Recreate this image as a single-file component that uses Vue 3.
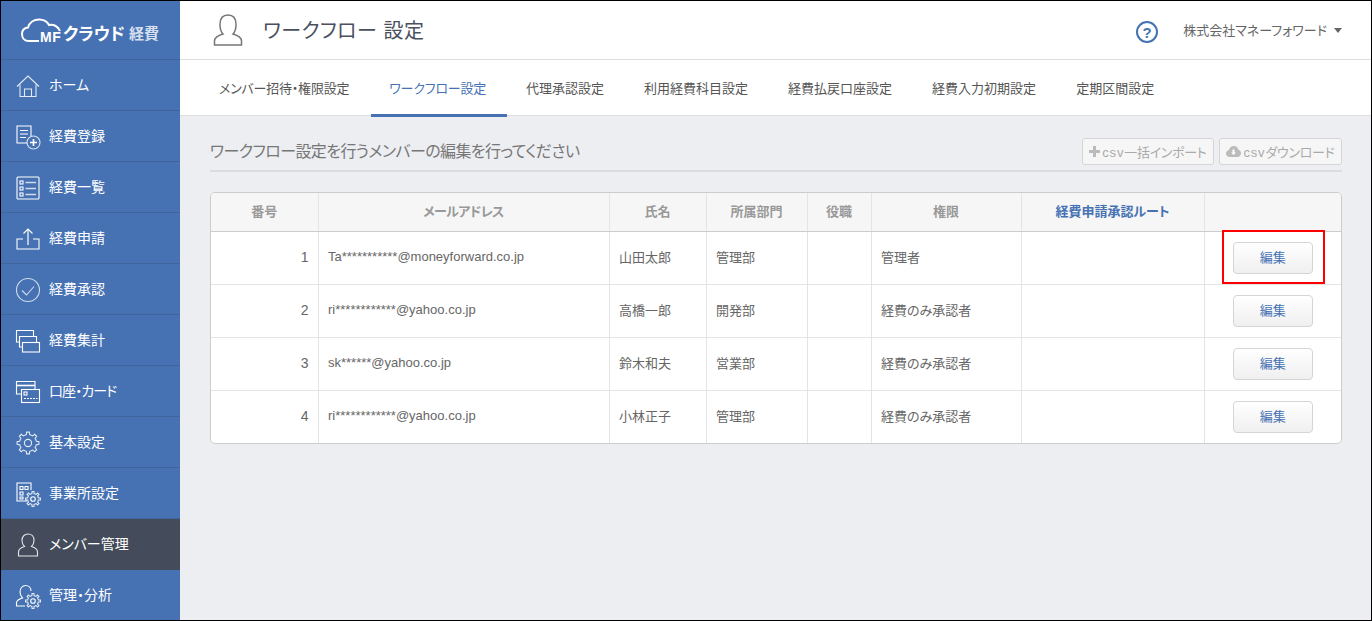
<template>
  <div class="page">
    <aside class="sidebar">
      <div class="logo">
        <svg class="cloud" width="42" height="26" viewBox="0 0 42 26" fill="none" stroke="#fff" stroke-width="2">
          <path d="M18 23H8C3 23 1 19.500 1 16C1 12.500 3.500 10 7 9.500C8.500 4.500 13 1.500 18 1.500C23 1.500 26 3 28 7C32 6 37 8 39 13" />
        </svg>
        <span class="mf">MF</span>
        <span class="logo-name">クラウド</span>
        <span class="logo-sub">経費</span>
      </div>
      <a v-for="item in menu" :key="item.label" class="nav-item" :class="{ active: item.active }">
        <svg class="nav-icon" width="26" height="26" viewBox="0 0 26 26" fill="none" stroke="#fff" stroke-width="1.100">
          <g v-if="item.icon === 'home'" opacity="0.85">
            <path d="M2 13.500L13 3L24 13.500" />
            <path d="M5 11.500V23.500H21V11.500" />
            <path d="M9.500 23.500V16H16.500V23.500" />
          </g>
          <g v-else-if="item.icon === 'add'">
            <path d="M16 12V2H2V19H12" />
            <path d="M5 6.500H13M5 10H13M5 13.500H11" />
            <circle cx="18.500" cy="18.500" r="6.500" opacity="0.8" />
            <path d="M18.500 15V22M15 18.500H22" stroke-width="1.600" />
          </g>
          <g v-else-if="item.icon === 'list'">
            <rect x="2" y="2" width="22" height="22" rx="1" />
            <rect x="5" y="6" width="3" height="3" />
            <rect x="5" y="12" width="3" height="3" />
            <rect x="5" y="18" width="3" height="3" />
            <path d="M10.500 7.500H21M10.500 13.500H21M10.500 19.500H21" stroke-width="1.600" opacity="0.75" />
          </g>
          <g v-else-if="item.icon === 'upload'">
            <path d="M8 13H2V23H24V13H18" />
            <path d="M13 19V3" stroke-width="1.600" opacity="0.75" />
            <path d="M8.500 7.500L13 3L17.500 7.500" />
          </g>
          <g v-else-if="item.icon === 'check'" opacity="0.75">
            <circle cx="13" cy="13" r="11.500" />
            <path d="M7 13.500L11.500 18L19 9.500" />
          </g>
          <g v-else-if="item.icon === 'stack'">
            <path d="M5 14H1.500V2.500H18.500V8" />
            <path d="M7.500 19H4.500V8.500H21.500V14" />
            <rect x="7.500" y="14.500" width="17" height="9.500" />
          </g>
          <g v-else-if="item.icon === 'card'">
            <path d="M6 15H1.500V2.500H20V10" />
            <path d="M1.500 6.500H20" stroke-width="1.600" />
            <rect x="6.500" y="10.500" width="18" height="13" />
            <rect x="9" y="13" width="3" height="3" />
            <path d="M9 19.500H22.500" stroke-dasharray="2 1" />
          </g>
          <g v-else-if="item.icon === 'gear'" opacity="0.85">
            <path :d="gearPath(13, 13, 8.500, 11, 8)" />
            <circle cx="13" cy="13" r="3.600" />
          </g>
          <g v-else-if="item.icon === 'office'">
            <path d="M12 20H2V2H16V9" />
            <path d="M5 5.500H8V8.500H5ZM10 5.500H13V8.500H10ZM5 11H8V14H5ZM5 16H8V18H5Z" />
            <path :d="gearPath(18, 18, 5.500, 7.500, 8)" opacity="0.85" />
            <circle cx="18" cy="18" r="2.300" />
          </g>
          <g v-else-if="item.icon === 'user'" opacity="0.85">
            <path d="M3.500 24V20C3.500 17 6 15.500 9.500 14.500C7.500 12.500 7 10.500 7 8.500C7 4.500 9.500 2 13 2C16.500 2 19 4.500 19 8.500C19 10.500 18.500 12.500 16.500 14.500C20 15.500 22.500 17 22.500 20V24Z" />
          </g>
          <g v-else>
            <path d="M10 23H1.500V20C1.500 17.500 4 16 7.500 15C5.500 13 5 11 5 9C5 5 7.500 2.500 10.500 2.500C13.500 2.500 16 4.500 16 8" />
            <path :d="gearPath(18, 18, 5.500, 7.500, 8)" opacity="0.85" />
            <circle cx="18" cy="18" r="2.300" />
          </g>
        </svg>
        <span class="nav-label" :class="{ tight: item.tight }">{{ item.label }}</span>
      </a>
    </aside>

    <div class="main">
      <header class="topbar">
        <svg class="title-icon" width="30" height="34" viewBox="0 0 30 34" fill="none" stroke="#777" stroke-width="1.500">
          <path d="M1.500 32V28C1.500 24.500 5 22.500 10 21C7.500 18.500 7 15.500 7 11.500C7 5.500 10 2 15 2C20 2 23 5.500 23 11.500C23 15.500 22.500 18.500 20 21C25 22.500 28.500 24.500 28.500 28V32Z" />
        </svg>
        <h1 class="title">ワークフロー 設定</h1>
        <span class="help">?</span>
        <span class="company">株式会社マネーフォワード</span>
        <span class="caret"></span>
      </header>

      <nav class="tabs">
        <a
          v-for="(tab, i) in tabs"
          :key="tab"
          class="tab"
          :class="{ current: tab === 'ワークフロー設定', tight: i < 2 }"
        >{{ tab }}</a>
      </nav>

      <section class="content">
        <div class="heading">
          <h2>ワークフロー設定を行うメンバーの編集を行ってください</h2>
          <div class="actions">
            <button class="ghost">
              <svg width="11" height="11" viewBox="0 0 11 11"><path d="M4 0H7V4H11V7H7V11H4V7H0V4H4Z" fill="#bbb" /></svg>
              <span><span class="csv">csv</span>一括インポート</span>
            </button>
            <button class="ghost">
              <svg width="15" height="11" viewBox="0 0 15 11"><path d="M4 11C1.500 11 0 9.500 0 7.500C0 5.500 1.500 4.500 2.800 4.300C3.500 1.500 5.500 0 7.800 0C10.200 0 12 1.500 12.500 3.800C14 4.200 15 5.500 15 7.200C15 9.500 13.500 11 11 11Z" fill="#bbb" /><path d="M6.500 3.500H8.500V6.500H10L7.500 9L5 6.500H6.500Z" fill="#fff" /></svg>
              <span><span class="csv">csv</span>ダウンロード</span>
            </button>
          </div>
        </div>

        <div class="table-wrap">
          <table>
            <colgroup>
              <col v-for="w in colWidths" :key="w" :style="{ width: w + 'px' }" />
            </colgroup>
            <thead>
              <tr>
                <th>番号</th>
                <th class="mail">メールアドレス</th>
                <th>氏名</th>
                <th>所属部門</th>
                <th>役職</th>
                <th>権限</th>
                <th class="route">経費申請承認ルート</th>
                <th></th>
              </tr>
            </thead>
            <tbody>
              <tr v-for="(m, i) in members" :key="m.no">
                <td class="no">{{ m.no }}</td>
                <td>{{ m.mail }}</td>
                <td>{{ m.name }}</td>
                <td>{{ m.dept }}</td>
                <td></td>
                <td>{{ m.role }}</td>
                <td></td>
                <td class="btn-cell">
                  <button class="edit">編集</button>
                  <span v-if="i === 0" class="highlight"></span>
                </td>
              </tr>
            </tbody>
          </table>
        </div>
      </section>
    </div>
  </div>
</template>

<script setup>
const menu = [
  { label: 'ホーム', icon: 'home' },
  { label: '経費登録', icon: 'add' },
  { label: '経費一覧', icon: 'list' },
  { label: '経費申請', icon: 'upload' },
  { label: '経費承認', icon: 'check' },
  { label: '経費集計', icon: 'stack' },
  { label: '口座・カード', icon: 'card', tight: true },
  { label: '基本設定', icon: 'gear' },
  { label: '事業所設定', icon: 'office' },
  { label: 'メンバー管理', icon: 'user', active: true },
  { label: '管理・分析', icon: 'manage' },
]

const tabs = [
  'メンバー招待・権限設定',
  'ワークフロー設定',
  '代理承認設定',
  '利用経費科目設定',
  '経費払戻口座設定',
  '経費入力初期設定',
  '定期区間設定',
]

const colWidths = [107, 291, 97, 101, 64, 150, 183, 137]

const members = [
  { no: 1, mail: 'Ta***********@moneyforward.co.jp', name: '山田太郎', dept: '管理部', role: '管理者' },
  { no: 2, mail: 'ri************@yahoo.co.jp', name: '高橋一郎', dept: '開発部', role: '経費のみ承認者' },
  { no: 3, mail: 'sk******@yahoo.co.jp', name: '鈴木和夫', dept: '営業部', role: '経費のみ承認者' },
  { no: 4, mail: 'ri************@yahoo.co.jp', name: '小林正子', dept: '管理部', role: '経費のみ承認者' },
]

// toothed outline for the settings icons
const gearPath = (cx, cy, inner, outer, teeth) => {
  const step = (Math.PI * 2) / teeth
  let d = ''
  for (let i = 0; i < teeth; i++) {
    const a = i * step
    const pts = [
      [inner, a - step * 0.5],
      [inner, a - step * 0.25],
      [outer, a - step * 0.16],
      [outer, a + step * 0.16],
      [inner, a + step * 0.25],
    ]
    pts.forEach(([r, t], j) => {
      const x = (cx + r * Math.cos(t)).toFixed(2)
      const y = (cy + r * Math.sin(t)).toFixed(2)
      d += (i === 0 && j === 0 ? 'M' : 'L') + x + ' ' + y
    })
  }
  return d + 'Z'
}
</script>

<style scoped>
.page {
  display: flex;
  height: 621px;
  box-sizing: border-box;
  border: 1px solid #000;
  overflow: hidden;
  font-family: "Liberation Sans", "Noto Sans CJK JP", sans-serif;
  font-feature-settings: "palt";
  color: #666;
  background: #edeef2;
}
.sidebar {
  width: 179px;
  flex-shrink: 0;
  background: #4672b3;
  color: #fff;
}
.logo {
  height: 58px;
  display: flex;
  align-items: center;
  padding-left: 20px;
  border-bottom: 1px solid #40659c;
  position: relative;
}
.cloud {
  margin-top: 2px;
}
.mf {
  position: absolute;
  left: 39px;
  top: 28px;
  font-size: 14px;
  font-weight: 700;
  letter-spacing: 0.5px;
}
.logo-name {
  margin: 5px 0 0 0;
  font-size: 17px;
  font-weight: 700;
}
.logo-sub {
  margin: 5px 0 0 4px;
  font-size: 15px;
  font-weight: 700;
  color: #d5dfee;
}
.nav-item {
  height: 50px;
  display: flex;
  align-items: center;
  padding-left: 15px;
  border-bottom: 1px solid #40659c;
}
.nav-item.active {
  background: #444c5c;
  border-bottom-color: #444c5c;
}
.nav-icon {
  flex-shrink: 0;
  margin: 2px 0 0 -1px;
}
.nav-label {
  margin: -3px 0 0 8px;
  font-size: 14px;
}
.nav-label.tight {
  letter-spacing: -0.9px;
}
.main {
  flex: 1;
  min-width: 0;
}
.topbar {
  height: 58px;
  display: flex;
  align-items: center;
  padding-left: 33px;
  background: #fff;
  border-bottom: 1px solid #ddd;
}
.title {
  margin: -2px 0 0 20px;
  flex: 1;
  font-size: 20px;
  font-weight: 400;
  letter-spacing: 0.5px;
  color: #4a5060;
}
.help {
  width: 18px;
  height: 18px;
  margin-top: 4px;
  border: 2px solid #4672b3;
  border-radius: 50%;
  display: flex;
  align-items: center;
  justify-content: center;
  font-size: 15px;
  font-weight: 700;
  color: #4672b3;
}
.company {
  margin: -1px 0 0 25px;
  font-size: 13px;
}
.caret {
  margin: 0 29px 0 7px;
  border: 4px solid transparent;
  border-top: 5px solid #666;
  border-bottom: 0;
}
.tabs {
  height: 55px;
  display: flex;
  padding-left: 19px;
  background: #fff;
  border-bottom: 1px solid #ddd;
}
.tab {
  padding: 0 20px;
  line-height: 58px;
  height: 57px;
  box-sizing: border-box;
  font-size: 13px;
  color: #555;
  white-space: nowrap;
}
.tab.tight {
  letter-spacing: -0.2px;
}
.tab.current {
  margin: 0 -1px 0 2px;
  padding: 0 21px 0 18px;
  color: #4672b3;
  border-bottom: 3px solid #4672b3;
}
.content {
  padding: 22px 29px 0 30px;
}
.heading {
  display: flex;
  justify-content: space-between;
  align-items: flex-start;
  height: 32px;
  border-bottom: 2px solid #dcdcdc;
}
.heading h2 {
  margin: 0;
  font-size: 16px;
  line-height: 27px;
  font-weight: 400;
  letter-spacing: -0.6px;
  color: #777;
}
.actions {
  display: flex;
  gap: 5px;
}
.ghost {
  height: 27px;
  padding: 0 6.500px;
  display: flex;
  align-items: center;
  gap: 2px;
  border: 1px solid #d5d5d5;
  border-radius: 3px;
  background: #f6f6f6;
  color: #aaa;
  font: inherit;
  font-size: 13px;
  letter-spacing: -0.3px;
}
.csv {
  letter-spacing: 0.8px;
}
.table-wrap {
  margin-top: 20px;
  border: 1px solid #ccc;
  border-radius: 5px;
  background: #fff;
  overflow: hidden;
}
table {
  width: 100%;
  table-layout: fixed;
  border-collapse: collapse;
}
th {
  height: 35px;
  padding: 0 0 3px;
  background: #f6f6f6;
  border-bottom: 1px solid #ccc;
  border-left: 1px solid #e4e4e4;
  font-size: 13px;
  font-weight: 700;
  color: #999;
}
th:first-child,
td:first-child {
  border-left: 0;
}
th.mail {
  letter-spacing: -0.6px;
}
th.route {
  color: #4672b3;
}
td {
  height: 49px;
  padding: 0 10px 3px 9.500px;
  border-top: 1px solid #e4e4e4;
  border-left: 1px solid #e4e4e4;
  font-size: 13px;
  color: #666;
}
tbody tr:first-child td {
  border-top: 0;
}
td.no {
  padding-right: 9px;
  text-align: right;
  font-size: 14px;
}
.btn-cell {
  position: relative;
  text-align: center;
  padding: 0;
}
.edit {
  width: 80px;
  height: 32px;
  padding: 0 0 3px;
  border: 1px solid #d5d5d5;
  border-radius: 4px;
  background: linear-gradient(#fff, #f0f0f0);
  color: #4672b3;
  font: inherit;
  font-size: 13px;
}
.highlight {
  position: absolute;
  left: 17px;
  top: -2px;
  width: 99px;
  height: 50px;
  border: 2px solid #f00;
}
</style>

<style>
html,
body {
  margin: 0;
}
</style>
